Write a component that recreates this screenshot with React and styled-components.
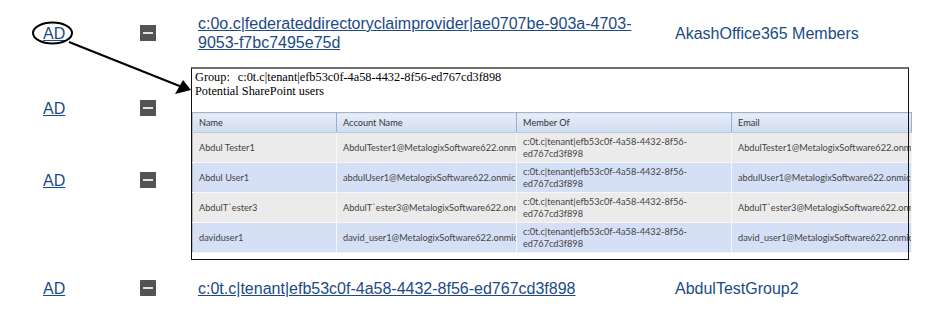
import React from 'react';
import styled, { createGlobalStyle } from 'styled-components';

const GlobalStyle = createGlobalStyle`
  html, body {
    margin: 0;
    padding: 0;
    background: #ffffff;
    overflow: hidden;
  }
`

const Page = styled.div`
  position: relative;
  width: 935px;
  height: 318px;
  overflow: hidden;
  font-family: Arial, "Liberation Sans", sans-serif;
`

const Row = styled.div`
  display: grid;
  grid-template-columns: 97px 58px 477px 1fr;
  align-items: center;
  height: ${p => p.h}px;
  padding-left: 43px;
  font-size: 16px;
  line-height: 19px;
  color: #1b4a86;
`

const Link = styled.a`
  color: #1b4a86;
  text-decoration: underline;
  cursor: pointer;
`

const ClaimCell = styled.div`
  padding-right: 38px;
`

const Toggle = styled.span`
  position: relative;
  display: block;
  width: 16px;
  height: 16px;
  background: #535353;

  &::after {
    content: '';
    position: absolute;
    left: 3px;
    top: 7px;
    width: 10px;
    height: 2px;
    background: #e2e2e2;
  }
`

const GroupName = styled.span`
  color: #1b4a86;
`

const Popup = styled.div`
  position: absolute;
  left: 191px;
  top: 67px;
  width: 718px;
  padding: 3px 0 7px 1px;
  box-sizing: border-box;
  background: #ffffff;
  z-index: 2;

  &::after {
    content: '';
    position: absolute;
    inset: 0;
    border: 1px solid #111;
    border-top: 2px solid #6f6f6f;
    pointer-events: none;
  }
`

const Caption = styled.div`
  padding: 0 3px;
  font-family: "Liberation Serif", "Times New Roman", serif;
  font-size: 12.3px;
  line-height: 14px;
  color: #000;
`

const Label = styled.span`
  margin-right: 8px;
`

const Grid = styled.table`
  margin-top: 14px;
  width: 719px;
  border-collapse: collapse;
  table-layout: fixed;
  font-family: Lato, "Open Sans", sans-serif;
  font-size: 9.2px;
  color: #444;
  border-bottom: 1px solid #b4b4b4;
  border-left: 1px solid #b4b4b4;
`

const Th = styled.th`
  height: 19px;
  padding: 0 6px;
  text-align: left;
  font-weight: normal;
  color: #333;
  background: linear-gradient(#e7eef9, #cfdcf1);
  border-top: 1px solid #a8b4c4;
  border-right: 1px solid #98afd0;
  border-bottom: 1px solid #b9c9de;
`

const Tr = styled.tr`
  background: ${p => (p.alt ? '#d5dff5' : '#ebebeb')};
`

const Td = styled.td`
  height: 29px;
  padding: 0 5px 0 6px;
  white-space: ${p => (p.wrap ? 'normal' : 'nowrap')};
  overflow: hidden;
  line-height: 12px;
  border-right: 1px solid #f6f6f6;
  border-bottom: 1px solid #f6f6f6;
`

const Annotation = styled.svg`
  position: absolute;
  left: 0;
  top: 0;
  width: 935px;
  height: 318px;
  pointer-events: none;
  z-index: 3;
`

const groupId = 'c:0t.c|tenant|efb53c0f-4a58-4432-8f56-ed767cd3f898';

const users = [
  { name: 'Abdul Tester1', account: 'AbdulTester1@MetalogixSoftware622.onmicrosoft.com', email: 'AbdulTester1@MetalogixSoftware622.onmicrosoft.com' },
  { name: 'Abdul User1', account: 'abdulUser1@MetalogixSoftware622.onmicrosoft.com', email: 'abdulUser1@MetalogixSoftware622.onmicrosoft.com' },
  { name: 'AbdulT`ester3', account: 'AbdulT`ester3@MetalogixSoftware622.onmicrosoft.com', email: 'AbdulT`ester3@MetalogixSoftware622.onmicrosoft.com' },
  { name: 'daviduser1', account: 'david_user1@MetalogixSoftware622.onmicrosoft.com', email: 'david_user1@MetalogixSoftware622.onmicrosoft.com' },
];

const rows = [
  { h: 66, claim: 'c:0o.c|federateddirectoryclaimprovider|ae0707be-903a-4703-9053-f7bc7495e75d', group: 'AkashOffice365 Members' },
  { h: 84 },
  { h: 60 },
  { h: 156, claim: groupId, group: 'AbdulTestGroup2' },
];

const App = () => {
  return (
    <Page>
      <GlobalStyle />
      {rows.map((r, i) => (
        <Row key={i} h={r.h}>
          <div><Link>AD</Link></div>
          <Toggle />
          <ClaimCell>{r.claim && <Link>{r.claim}</Link>}</ClaimCell>
          <GroupName>{r.group}</GroupName>
        </Row>
      ))}

      <Popup>
        <Caption>
          <div><Label>Group:</Label>{groupId}</div>
          <div>Potential SharePoint users</div>
        </Caption>
        <Grid>
          <colgroup>
            <col style={{ width: 144 }} />
            <col style={{ width: 180 }} />
            <col style={{ width: 215 }} />
            <col style={{ width: 180 }} />
          </colgroup>
          <thead>
            <tr>
              <Th>Name</Th>
              <Th>Account Name</Th>
              <Th>Member Of</Th>
              <Th>Email</Th>
            </tr>
          </thead>
          <tbody>
            {users.map((u, i) => (
              <Tr key={u.name} alt={i % 2 === 1}>
                <Td>{u.name}</Td>
                <Td>{u.account}</Td>
                <Td wrap>{groupId}</Td>
                <Td>{u.email}</Td>
              </Tr>
            ))}
          </tbody>
        </Grid>
      </Popup>

      <Annotation viewBox="0 0 935 318">
        <ellipse cx="52.5" cy="33" rx="19.5" ry="10.5" fill="none" stroke="#000" strokeWidth="2" />
        <line x1="69" y1="42" x2="182" y2="87" stroke="#000" strokeWidth="2" />
        <polygon points="175,94 183,80 191,90" fill="#000" />
      </Annotation>
    </Page>
  );
};

export default App;
